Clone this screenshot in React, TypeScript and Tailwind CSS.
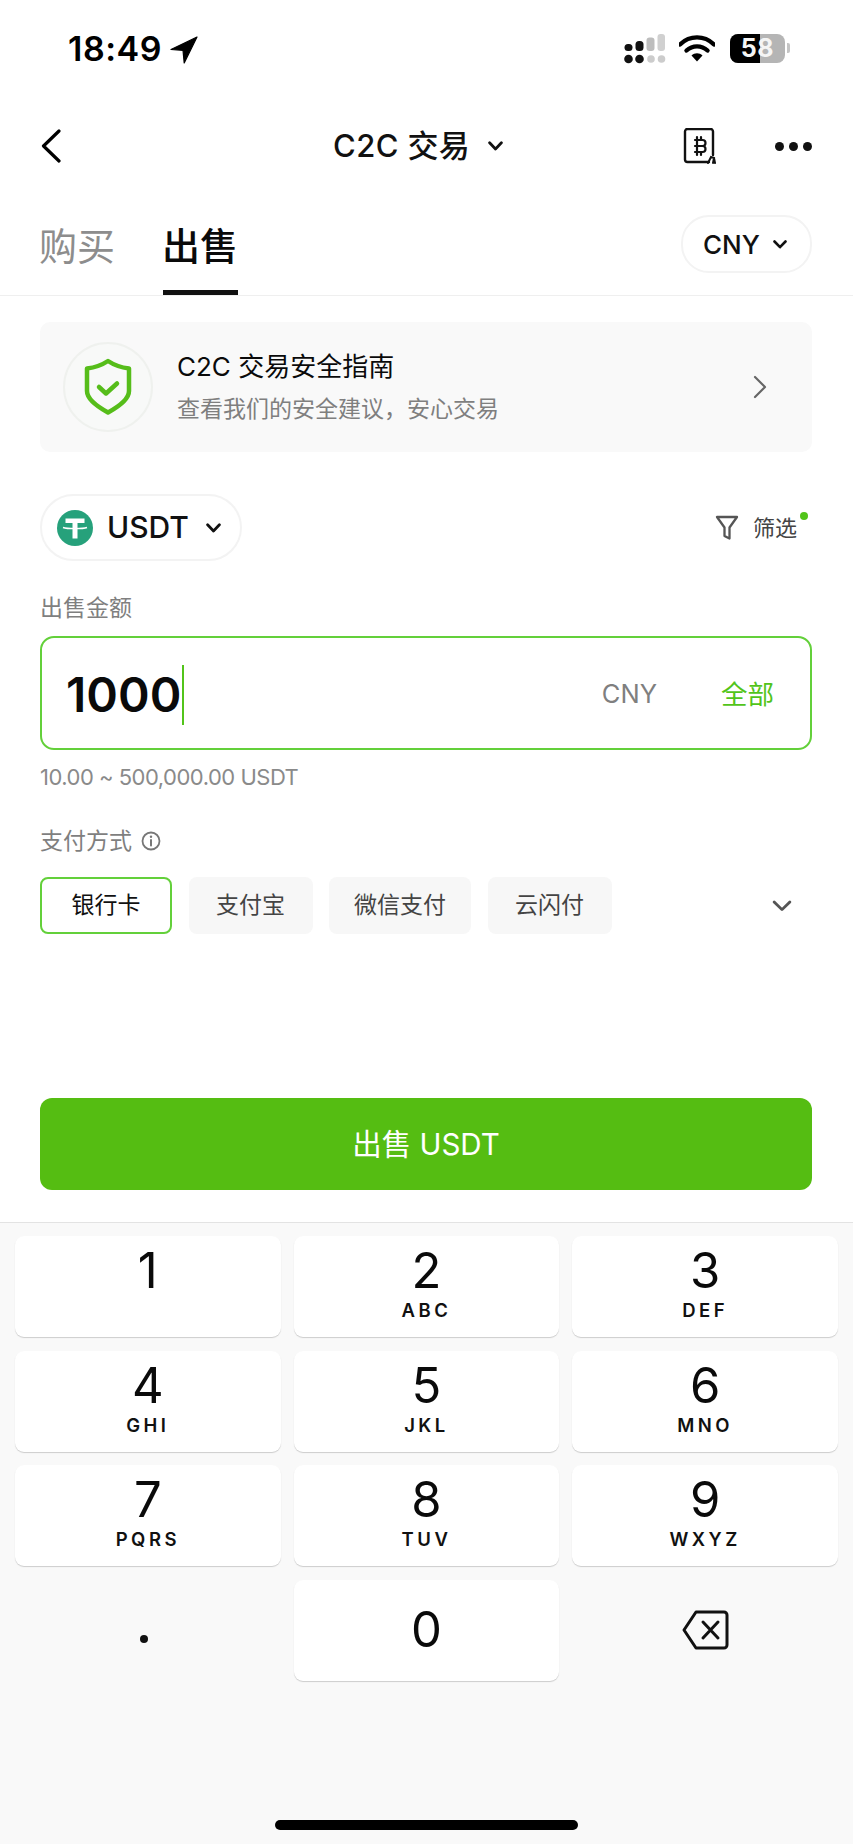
import React from "react";

const FONT = "font-['Inter','Noto_Sans_CJK_SC',sans-serif]";

function Chevron({ className, w = 14, h = 9, sw = 2.6 }: { className?: string; w?: number; h?: number; sw?: number }) {
  return (
    <svg width={w} height={h} viewBox="0 0 14 9" className={className} fill="none" preserveAspectRatio="none">
      <path d="M1.5 1.5 7 7.2l5.5-5.7" stroke="currentColor" strokeWidth={sw} strokeLinecap="round" strokeLinejoin="round" />
    </svg>
  );
}

function StatusBar() {
  return (
    <div className="flex h-[114px] items-start pl-[68px] pt-[31px]">
      <span className="text-[34px] leading-[36px] font-semibold text-black tracking-[0.5px]">18:49</span>
      <svg width="28" height="28" viewBox="0 0 28 28" className="ml-[8px] mt-[5px]">
        <path d="M27 1 1 13.5l12 .8 1.2 12.7z" fill="#000" stroke="#000" strokeWidth="1.2" strokeLinejoin="round" />
      </svg>
      <svg width="42" height="30" viewBox="0 0 42 30" className="ml-[426px] mt-[3px]">
        <circle cx="4.5" cy="25" r="4.3" fill="#111" />
        <circle cx="15.5" cy="25" r="4.3" fill="#111" />
        <circle cx="27" cy="25" r="3.8" fill="#ccc" />
        <circle cx="37.5" cy="25" r="3.8" fill="#ccc" />
        <rect x="0.5" y="10" width="8" height="7" rx="3.5" fill="#111" />
        <rect x="11.5" y="7" width="8" height="10" rx="3.5" fill="#111" />
        <rect x="22.5" y="3.5" width="8" height="13.5" rx="3" fill="#bdbdbd" />
        <rect x="33.5" y="0" width="7.5" height="17" rx="3" fill="#d0d0d0" />
      </svg>
      <svg width="36" height="28" viewBox="0 0 36 28" className="ml-[13px] mt-[3px]">
        <path d="M1 10.5C10.5 1 25.500 1 35 10.500" fill="none" stroke="#000" strokeWidth="4.4" strokeLinecap="round" />
        <path d="M7.500 16.500c6-5.500 15-5.500 21 0" fill="none" stroke="#000" strokeWidth="4.4" strokeLinecap="round" />
        <path d="M12.500 21.500c3-3 8-3 11 0L18 27.500z" fill="#000" />
      </svg>
      <div className="relative ml-[15px] mt-[3px] flex h-[29px] w-[55px] overflow-hidden rounded-[8px] bg-[#b5b5b5]">
        <div className="h-full w-[30px] bg-black" />
        <span className="absolute inset-0 text-center text-[25px] leading-[29px] font-bold tracking-[0.5px] text-[#f5f5f5]">58</span>
      </div>
      <div className="ml-[2px] mt-[12px] h-[10px] w-[3px] rounded-r-[2px] bg-[#c4c4c4]" />
    </div>
  );
}

function Header() {
  return (
    <div className="flex h-[64px] items-center pl-[40px]">
      <div className="w-[293px] shrink-0">
        <svg width="22" height="34" viewBox="0 0 22 34" fill="none">
          <path d="M19 2 3.500 17 19 32" stroke="#000" strokeWidth="3.200" strokeLinecap="round" strokeLinejoin="round" />
        </svg>
      </div>
      <span className="w-[137px] shrink-0 whitespace-nowrap text-[31px] leading-[40px] font-medium tracking-[0.4px] text-[#111]">C2C 交易</span>
      <Chevron className="ml-[18px] shrink-0 text-[#111]" w={15} h={10} />
      <svg width="34" height="36" viewBox="0 0 34 36" fill="none" className="ml-[179px] shrink-0">
        <path d="M27 34H5.500a2.500 2.500 0 0 1-2.500-2.500v-28A2.500 2.500 0 0 1 5.500 1h23A2.500 2.500 0 0 1 31 3.500V27" stroke="#111" strokeWidth="2.400" strokeLinecap="round" />
        <path d="M15 9v3M19 9v3M15 24v3M19 24v3M13 12h7.500a3 3 0 0 1 0 6H13M20.500 18a3 3 0 0 1 0 6H13M15 12v12" stroke="#111" strokeWidth="2.200" strokeLinecap="round" />
        <path d="M26 35l3-6 3 1-1 5M32 30l1 5" stroke="#111" strokeWidth="2" strokeLinecap="round" />
      </svg>
      <div className="ml-[59px] flex shrink-0 gap-[5px]">
        <div className="h-[9px] w-[9px] rounded-full bg-[#111]" />
        <div className="h-[9px] w-[9px] rounded-full bg-[#111]" />
        <div className="h-[9px] w-[9px] rounded-full bg-[#111]" />
      </div>
    </div>
  );
}

function Tabs() {
  return (
    <div className="flex h-[118px] items-start border-b border-[#efefef] pl-[39px] pr-[41px]">
      <div className="mt-[39px] text-[38px] leading-[58px] font-normal text-[#8d8d8d]">购买</div>
      <div className="ml-[47px] mt-[39px] flex w-[76px] flex-col items-center">
        <span className="text-[38px] leading-[58px] font-medium text-[#0a0a0a]">出售</span>
        <div className="mt-[15px] h-[5px] w-[75px] bg-[#111]" />
      </div>
      <div className="ml-auto mt-[37px] flex h-[58px] w-[131px] items-center rounded-[28px] border-2 border-[#f3f3f3] pl-[20px]">
        <span className="text-[26px] font-medium text-[#111]">CNY</span>
        <Chevron className="ml-[13px] text-[#111]" w={14} h={9} />
      </div>
    </div>
  );
}

function GuideCard() {
  return (
    <div className="ml-[40px] mr-[41px] mt-[26px] flex h-[130px] items-center rounded-[10px] bg-[#f9f9f9] pl-[23px] pr-[45px]">
      <div className="flex h-[90px] w-[90px] items-center justify-center rounded-full border-2 border-[#eff1ee] bg-[#f8f9f8]">
        <svg width="48" height="58" viewBox="0 0 48 58" fill="none">
          <path d="M24 3 Q33 9 45 10.500V33C45 41 34 49 24 54.500 14 49 3 41 3 33V10.500Q15 9 24 3z" stroke="#56bd1a" strokeWidth="4.500" strokeLinejoin="round" />
          <path d="M15 29l7 6.500 11-10" stroke="#56bd1a" strokeWidth="4.500" strokeLinecap="round" strokeLinejoin="round" />
        </svg>
      </div>
      <div className="ml-[24px] flex flex-col">
        <span className="text-[26px] leading-[36px] font-normal text-[#0a0a0a]">C2C 交易安全指南</span>
        <span className="mt-[8px] text-[23px] leading-[32px] text-[#7f7f7f]">查看我们的安全建议，安心交易</span>
      </div>
      <svg width="14" height="24" viewBox="0 0 14 24" fill="none" className="ml-auto">
        <path d="M2 2l10 10L2 22" stroke="#666" strokeWidth="2.200" strokeLinecap="round" strokeLinejoin="round" />
      </svg>
    </div>
  );
}

function CoinRow() {
  return (
    <div className="ml-[40px] mr-[41px] mt-[42px] flex items-center">
      <div className="flex h-[67px] w-[202px] items-center rounded-[34px] border-2 border-[#f3f3f3] pl-[15px]">
        <svg width="36" height="36" viewBox="0 0 36 36">
          <circle cx="18" cy="18" r="18" fill="#26a17b" />
          <path d="M8.500 8.500h19v4.500h-7v15.500h-5V13h-7z" fill="#fff" />
          <path d="M6 17.500c4 1.500 20 1.500 24 0" fill="none" stroke="#fff" strokeWidth="1.400" />
        </svg>
        <span className="ml-[14px] text-[30px] font-medium text-[#111]">USDT</span>
        <Chevron className="ml-[17px] text-[#111]" w={15} h={10} />
      </div>
      <svg width="24" height="26" viewBox="0 0 24 26" fill="none" className="ml-auto">
        <path d="M2 2h20l-7.500 10.500V23.500l-5-2.500v-8.500z" stroke="#555" strokeWidth="2.300" strokeLinejoin="round" />
      </svg>
      <div className="relative ml-[14px] mr-[15px]">
        <span className="text-[22px] leading-[30px] text-[#444]">筛选</span>
        <div className="absolute -right-[11px] -top-[1px] h-[8px] w-[8px] rounded-full bg-[#52c41a]" />
      </div>
    </div>
  );
}

function AmountField() {
  return (
    <div className="ml-[40px] mr-[41px]">
      <div className="mt-[31px] text-[23px] leading-[32px] text-[#7f7f7f]">出售金额</div>
      <div className="mt-[12px] flex h-[114px] items-center rounded-[14px] border-2 border-[#63d03a] pl-[24px] pr-[36px] pt-[3px]">
        <span className="text-[48px] font-semibold leading-[60px] text-[#0a0a0a]">1000</span>
        <div className="ml-[1px] h-[60px] w-[2px] bg-[#52c41a]" />
        <span className="ml-auto text-[25.500px] text-[#7f7f7f]">CNY</span>
        <span className="ml-[64px] text-[26.500px] text-[#52c41a]">全部</span>
      </div>
      <div className="mt-[11px] text-[22px] leading-[32px] tracking-[-0.5px] text-[#8a8a8a]">10.00 ~ 500,000.00 USDT</div>
    </div>
  );
}

function Payment() {
  const others: [string, string][] = [
    ["支付宝", "w-[124px]"],
    ["微信支付", "w-[142px]"],
    ["云闪付", "w-[124px]"],
  ];
  return (
    <div className="ml-[40px] mr-[41px]">
      <div className="mt-[32px] flex items-center">
        <span className="text-[23px] leading-[32px] text-[#7f7f7f]">支付方式</span>
        <svg width="20" height="20" viewBox="0 0 20 20" fill="none" className="ml-[9px]">
          <circle cx="10" cy="10" r="8.500" stroke="#777" strokeWidth="1.800" />
          <path d="M10 9v5.500" stroke="#777" strokeWidth="2" strokeLinecap="round" />
          <circle cx="10" cy="5.800" r="1.200" fill="#777" />
        </svg>
      </div>
      <div className="mt-[20px] flex items-center gap-[16.500px]">
        <div className="flex h-[57px] w-[132px] items-center justify-center rounded-[8px] border-2 border-[#63d03a] text-[23px] text-[#111]">
          银行卡
        </div>
        {others.map(([t, w]) => (
          <div key={t} className={`flex h-[57px] ${w} items-center justify-center rounded-[8px] bg-[#f7f7f7] text-[23px] text-[#444]`}>
            {t}
          </div>
        ))}
        <Chevron className="ml-auto mr-[20px] text-[#555]" w={20} h={12} sw={2} />
      </div>
    </div>
  );
}

function Key({ d, l }: { d: string; l?: string }) {
  return (
    <div className={`flex h-[101px] flex-col items-center rounded-[9px] bg-white shadow-[0_1px_1px_rgba(0,0,0,0.18)] ${d === "0" ? "pt-[20px]" : "pt-[5px]"}`}>
      <span className="text-[49px] leading-[60px] text-[#0a0a0a]">{d}</span>
      {l && <span className="-mt-[2px] text-[18.500px] leading-[22px] font-semibold tracking-[3.500px] text-[#111]">{l}</span>}
    </div>
  );
}

function Keyboard() {
  const keys: [string, string?][] = [
    ["1"], ["2", "ABC"], ["3", "DEF"],
    ["4", "GHI"], ["5", "JKL"], ["6", "MNO"],
    ["7", "PQRS"], ["8", "TUV"], ["9", "WXYZ"],
  ];
  return (
    <div className="flex flex-1 flex-col border-t border-[#e3e3e3] bg-[#f9f9f9]">
      <div className="mt-[13px] grid grid-cols-3 gap-x-[13px] gap-y-[13.500px] px-[15px]">
        {keys.map(([d, l]) => <Key key={d} d={d} l={l} />)}
        <div className="flex items-center justify-center pr-[8px] pt-[18px]">
          <div className="h-[8px] w-[8px] rounded-full bg-[#111]" />
        </div>
        <Key d="0" />
        <div className="flex items-start justify-center pt-[30px]">
          <svg width="47" height="40" viewBox="0 0 47 40" fill="none">
            <path d="M14 2h28a3 3 0 0 1 3 3v30a3 3 0 0 1-3 3H14L2 20z" stroke="#111" strokeWidth="3" strokeLinejoin="round" />
            <path d="M21 12l15 16M36 12 21 28" stroke="#111" strokeWidth="3" strokeLinecap="round" />
          </svg>
        </div>
      </div>
      <div className="mt-auto mb-[14px] h-[10px] w-[303px] self-center rounded-full bg-black" />
    </div>
  );
}

export default function App() {
  return (
    <div className={`flex h-[1844px] w-[853px] flex-col overflow-hidden bg-white ${FONT}`}>
      <StatusBar />
      <Header />
      <Tabs />
      <GuideCard />
      <CoinRow />
      <AmountField />
      <Payment />
      <div className="ml-[40px] mr-[41px] mt-[164px] flex h-[92px] items-center justify-center rounded-[12px] bg-[#55bd12] text-[29.500px] text-white">
        出售 USDT
      </div>
      <div className="h-[32px] shrink-0" />
      <Keyboard />
    </div>
  );
}
